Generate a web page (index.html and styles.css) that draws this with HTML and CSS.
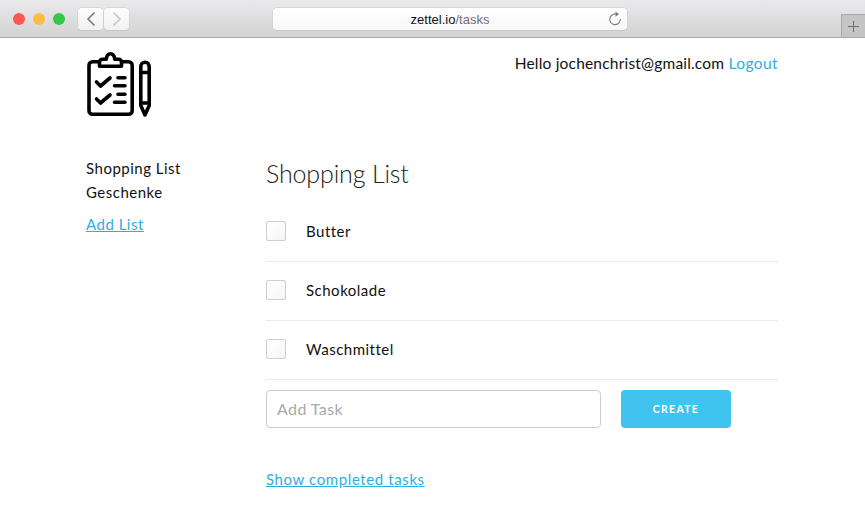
FILE: index.html
```
<!DOCTYPE html>
<html lang="en">
<head>
<meta charset="utf-8">
<title>zettel.io/tasks</title>
<link rel="stylesheet" href="styles.css">
</head>
<body>
<header class="chrome">
  <div class="lights"><span class="light red"></span><span class="light yellow"></span><span class="light green"></span></div>
  <div class="nav">
    <span class="nav-btn"><svg width="10" height="16" viewBox="0 0 10 16"><path d="M8.5 1.5 2 8l6.500 6.500" fill="none" stroke="#77777a" stroke-width="1.500"/></svg></span>
    <span class="nav-btn"><svg width="10" height="16" viewBox="0 0 10 16"><path d="M1.500 1.500 8 8l-6.500 6.500" fill="none" stroke="#c4c4c6" stroke-width="1.500"/></svg></span>
  </div>
  <div class="url">
    <span class="url-text"><b>zettel.io</b>/tasks</span>
    <svg class="reload" width="14" height="15" viewBox="0 0 14 15"><path d="M8.300 3.200A5.300 5.300 0 1 0 12.300 8" fill="none" stroke="#77777a" stroke-width="1.100"/><path d="M7.500 .6 11 3.200 7.500 5.800z" fill="#77777a"/></svg>
  </div>
  <span class="newtab"><svg width="11" height="11" viewBox="0 0 11 11"><path d="M5.500 0v11M0 5.500h11" stroke="#6f6f6f" stroke-width="1"/></svg></span>
</header>
<div class="page">
  <div class="top">
    <svg class="logo" width="66" height="66" viewBox="0 0 66 66" fill="none" stroke="#000" stroke-width="3.600" stroke-linecap="round" stroke-linejoin="round">
      <path d="M12 10.800H6.500A3.500 3.500 0 0 0 3 14.300v45.400a3.500 3.500 0 0 0 3.500 3.500h36.200a3.500 3.500 0 0 0 3.500-3.500V14.300a3.500 3.500 0 0 0-3.500-3.500H37"/>
      <path d="M13.500 15.200v-4a3 3 0 0 1 3-3h3.700c.5-3.300 2.300-5.400 4.300-5.400s3.800 2.100 4.300 5.400H32.500a3 3 0 0 1 3 3v4z"/>
      <path d="M10.500 31l4 4 9.500-8M10.500 48l4 4 9.500-8"/>
      <path d="M32 26.700h7M28.500 34.700h10.500M32 43.300h7M28.500 51.300h10.500"/>
      <path d="M54.800 15.500a4.200 4.200 0 0 1 8.400 0V54.500L59 64l-4.200-9.500zM54.800 21.500h8.400M54.800 52h8.400"/>
    </svg>
    <p class="hello">Hello jochenchrist@gmail.com <a class="link plain logout" href="#">Logout</a></p>
  </div>
  <div class="main">
    <nav class="side">
      <div class="side-item">Shopping List</div>
      <div class="side-item">Geschenke</div>
      <a class="link add-list" href="#">Add List</a>
    </nav>
    <section class="content">
      <h1 class="title">Shopping List</h1>
      <ul class="tasks">
        <li class="task"><span class="check"></span>Butter</li>
        <li class="task"><span class="check"></span>Schokolade</li>
        <li class="task"><span class="check"></span>Waschmittel</li>
      </ul>
      <form class="add">
        <input class="field" placeholder="Add Task">
        <button class="create" type="button">CREATE</button>
      </form>
      <a class="link completed" href="#">Show completed tasks</a>
    </section>
  </div>
</div>
</body>
</html>
```
FILE: styles.css
```
* { box-sizing: border-box; }
html, body { margin: 0; height: 100%; }
body { background: #fff; color: #111; font-family: Lato, "Open Sans", sans-serif; font-size: 16px; overflow: hidden; }
.chrome { height: 38px; display: flex; align-items: flex-start; background: linear-gradient(#eae9ec, #d3d3d3); border-bottom: 1px solid #a9a9a9; position: relative; }
.lights { display: flex; gap: 8px; margin: 13px 0 0 13px; }
.light { width: 12px; height: 12px; border-radius: 50%; }
.red { background: #fc5753; }
.yellow { background: #fdbc40; }
.green { background: #33c748; }
.nav { display: flex; gap: 1px; margin: 8px 0 0 13px; }
.nav-btn { width: 25px; height: 22px; background: linear-gradient(#fdfdfd, #f1f1f1); border-radius: 4px; box-shadow: 0 0 0 .5px #c9c9c9, 0 1px 0 #c4c4c4; display: flex; align-items: center; justify-content: center; }
.url { width: 354px; height: 22px; margin: 8px 0 0 144px; background: linear-gradient(#fff, #f7f7f7); border-radius: 4px; box-shadow: 0 0 0 .5px #c9c9c9, 0 1px 0 #c4c4c4; display: flex; align-items: center; justify-content: center; position: relative; }
.url-text { font-family: "Liberation Sans", sans-serif; font-size: 13px; color: #6f7072; }
.url-text b { font-weight: 400; color: #111; }
.reload { position: absolute; right: 5px; top: 3px; }
.newtab { position: absolute; right: 0; top: 14px; width: 24px; height: 23px; background: #c6c5c6; border-left: 1px solid #a9a9a9; border-top: 1px solid #a9a9a9; display: flex; align-items: center; justify-content: center; }
.page { padding: 0 87px 0 86px; }
.top { display: flex; justify-content: space-between; align-items: flex-start; padding-top: 13px; }
.logo { display: block; }
.hello { margin: 1px 0 0; font-size: 15.500px; line-height: 22px; color: #111; letter-spacing: .19px; }
.link { color: #2eaee0; }
.plain { text-decoration: none; }
.logout { letter-spacing: .42px; }
.main { display: flex; margin-top: 39px; }
.side { width: 180px; flex: none; letter-spacing: .5px; font-size: 15px; }
.side-item { line-height: 24px; }
.add-list { display: block; margin-top: 8px; line-height: 24px; }
.content { flex: 1; }
.title { margin: 0; font-size: 25px; font-weight: 300; line-height: 34px; color: #222; letter-spacing: -.15px; }
.tasks { list-style: none; margin: 13px 0 0; padding: 0; }
.task { height: 59px; display: flex; align-items: center; border-bottom: 1px solid #ebebeb; font-size: 15px; letter-spacing: .5px; padding-bottom: 3px; }
.check { width: 20px; height: 20px; border: 1px solid #cfcfcf; border-radius: 2px; margin-right: 20px; background: linear-gradient(135deg, #fff, #f6f6f6); }
.add { display: flex; gap: 20px; margin-top: 10px; }
.field { width: 335px; height: 38px; border: 1px solid #ccc; border-radius: 4px; padding: 0 10px 2px; font: 16px Lato, sans-serif; letter-spacing: .4px; }
.field::placeholder { color: #a8a8a8; opacity: 1; }
.create { width: 110px; height: 38px; border: 0; border-radius: 4px; background: #41c3f0; color: #fff; font: 700 10.500px Lato, sans-serif; letter-spacing: 1.300px; padding-bottom: 2px; }
.completed { display: inline-block; margin-top: 40px; font-size: 15px; line-height: 22px; letter-spacing: .6px; }
```
